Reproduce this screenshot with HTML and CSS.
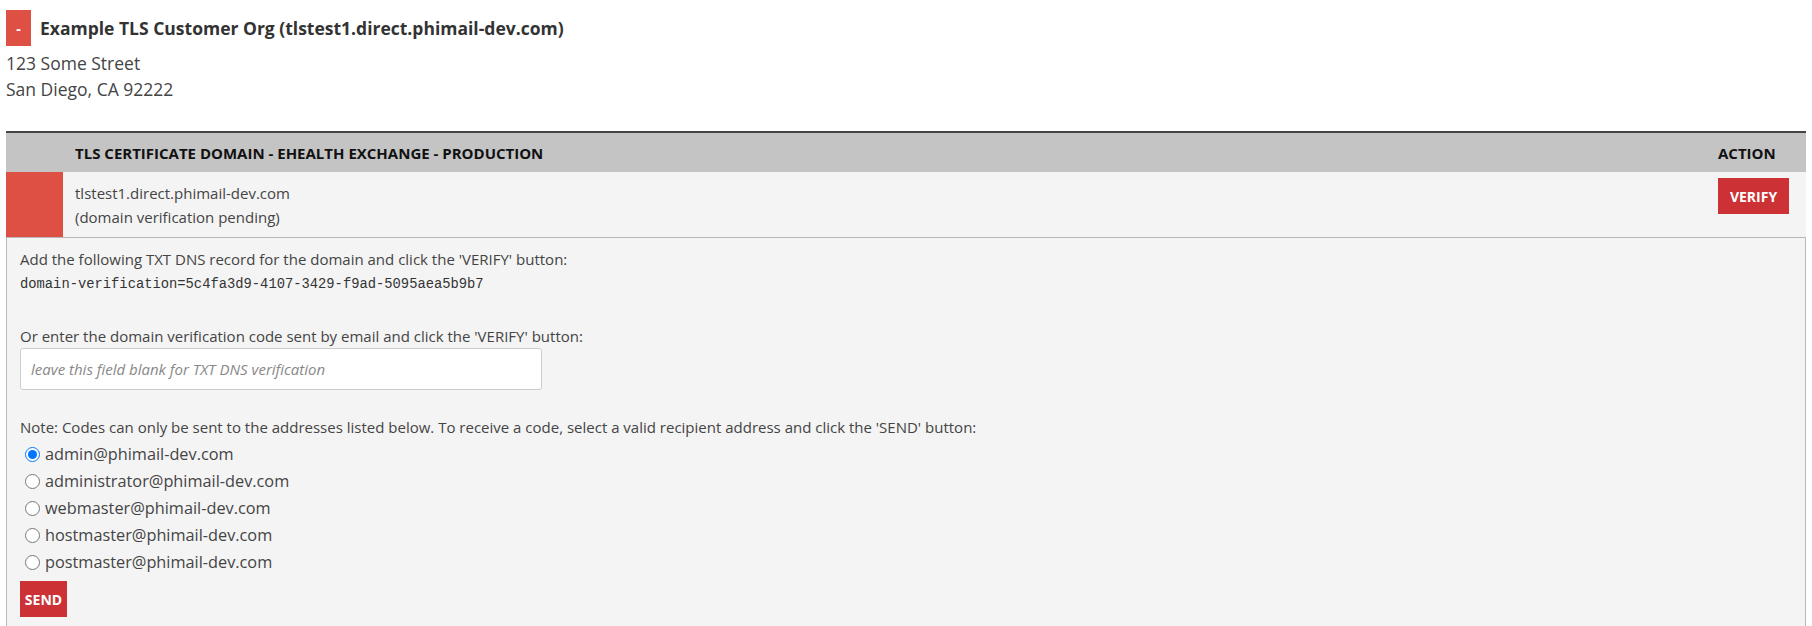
FILE: index.html
```html
<!DOCTYPE html>
<html>
<head>
<meta charset="utf-8">
<link rel="stylesheet" href="styles.css">
</head>
<body>
<div class="page">
  <div class="org-head">
    <button class="toggle">-</button>
    <h2 class="org-title">Example TLS Customer Org (tlstest1.direct.phimail-dev.com)</h2>
  </div>
  <div class="address">
    <div>123 Some Street</div>
    <div>San Diego, CA 92222</div>
  </div>

  <table class="domains">
    <thead>
      <tr>
        <th class="c-flag"></th>
        <th class="c-name">TLS Certificate Domain - eHealth Exchange - Production</th>
        <th class="c-action">Action</th>
      </tr>
    </thead>
    <tbody>
      <tr>
        <td class="c-flag flag-red"></td>
        <td class="c-name">
          <div>tlstest1.direct.phimail-dev.com</div>
          <div>(domain verification pending)</div>
        </td>
        <td class="c-action"><button class="btn verify">Verify</button></td>
      </tr>
    </tbody>
  </table>

  <div class="detail">
    <p class="line">Add the following TXT DNS record for the domain and click the 'VERIFY' button:</p>
    <p class="code">domain-verification=5c4fa3d9-4107-3429-f9ad-5095aea5b9b7</p>
    <p class="line or-line">Or enter the domain verification code sent by email and click the 'VERIFY' button:</p>
    <input class="code-input" type="text" placeholder="leave this field blank for TXT DNS verification">
    <p class="line note">Note: Codes can only be sent to the addresses listed below. To receive a code, select a valid recipient address and click the 'SEND' button:</p>
    <div class="radios">
      <label class="radio"><input type="radio" name="rcpt" checked>admin@phimail-dev.com</label>
      <label class="radio"><input type="radio" name="rcpt">administrator@phimail-dev.com</label>
      <label class="radio"><input type="radio" name="rcpt">webmaster@phimail-dev.com</label>
      <label class="radio"><input type="radio" name="rcpt">hostmaster@phimail-dev.com</label>
      <label class="radio"><input type="radio" name="rcpt">postmaster@phimail-dev.com</label>
    </div>
    <button class="btn send">Send</button>
  </div>
</div>
</body>
</html>
```
FILE: styles.css
```css
html, body {
  margin: 0;
  padding: 0;
  background: #ffffff;
}
body {
  font-family: "Open Sans", "Liberation Sans", sans-serif;
  color: #444;
}
.page {
  padding: 0 6px;
}
.org-head {
  display: flex;
  align-items: center;
  gap: 9px;
  padding-top: 10px;
}
.toggle {
  width: 25px;
  height: 36px;
  border: none;
  background: #df5044;
  color: #fff;
  font-family: "Open Sans", sans-serif;
  font-weight: 700;
  font-size: 14px;
  padding: 0;
}
.org-title {
  margin: 0;
  font-size: 17.5px;
  font-weight: 700;
  color: #333;
}
.address {
  margin-top: 5px;
  font-size: 17.5px;
  line-height: 25.5px;
  color: #444;
}
.domains {
  width: 100%;
  margin-top: 29px;
  border-collapse: separate;
  border-spacing: 0;
  border-top: 2px solid #444;
}
.domains th {
  background: #c4c4c4;
  height: 39px;
  padding: 0 12px;
  text-align: left;
  font-size: 15px;
  font-weight: 700;
  text-transform: uppercase;
  color: #111;
}
.domains td {
  background: #f4f4f4;
  vertical-align: top;
  font-size: 15px;
  line-height: 24px;
  color: #444;
  border-bottom: 1px solid #b8b8b8;
}
.domains .c-flag {
  width: 57px;
  padding: 0;
}
.domains .flag-red {
  background: #df5044;
}
.domains td.c-name {
  padding: 9px 12px 8px;
}
.domains .c-action {
  width: 71px;
  padding-left: 12px;
  padding-right: 17px;
}
.domains td.c-action {
  padding-top: 6px;
}
.btn {
  display: inline-block;
  height: 36px;
  padding: 0;
  border: none;
  background: #cc3235;
  color: #fff;
  font-family: "Open Sans", sans-serif;
  font-weight: 700;
  font-size: 14px;
  text-transform: uppercase;
  text-align: center;
  cursor: pointer;
}
.verify {
  width: 71px;
}
.detail {
  background: #f4f4f4;
  border-left: 1px solid #b8b8b8;
  border-right: 1px solid #b8b8b8;
  padding: 11px 13px 20px;
  font-size: 15px;
  line-height: 21px;
  color: #444;
}
.detail p {
  margin: 0;
}
.detail .code {
  margin-top: 4px;
  font-family: "Liberation Mono", "DejaVu Sans Mono", monospace;
  font-size: 13.8px;
  color: #333;
}
.detail .or-line {
  margin-top: 31px;
}
.code-input {
  display: block;
  box-sizing: border-box;
  width: 522px;
  height: 42px;
  margin-top: 1px;
  border: 1px solid #ccc;
  border-radius: 3px;
  background: #fff;
  padding: 0 10px;
  font-family: "Open Sans", sans-serif;
  font-size: 15px;
}
.code-input::placeholder {
  font-style: italic;
  color: #888;
}
.detail .note {
  margin-top: 27px;
}
.radios {
  display: flex;
  flex-direction: column;
  margin-top: 3px;
}
.radio {
  display: flex;
  align-items: center;
  height: 27px;
  font-size: 16.3px;
  color: #444;
}
.radio input {
  width: 15px;
  height: 15px;
  margin: 0 5px 0 5px;
}
.send {
  display: block;
  margin-top: 5px;
  width: 47px;
}
```
